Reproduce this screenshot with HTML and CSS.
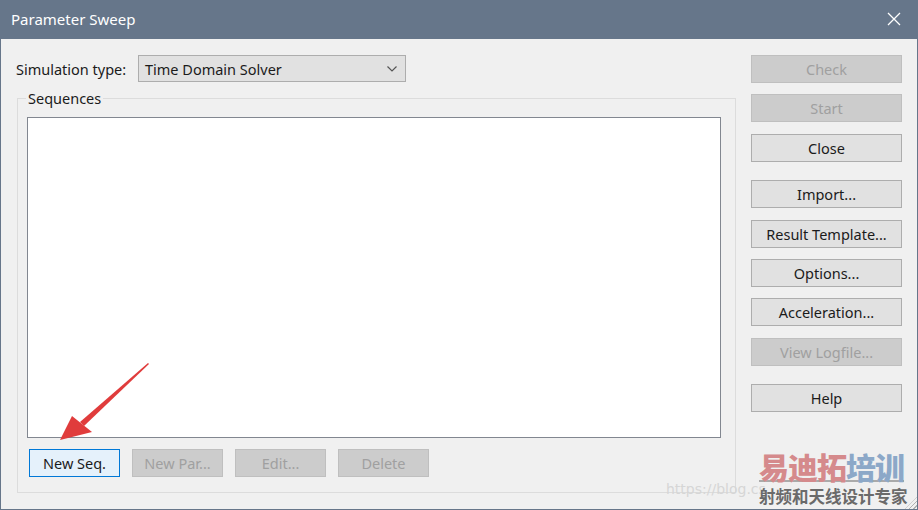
FILE: index.html
```html
<!DOCTYPE html>
<html>
<head>
<meta charset="utf-8">
<link rel="stylesheet" href="styles.css">
</head>
<body>
<div class="window">
  <div class="titlebar">
    <span class="title">Parameter Sweep</span>
    <svg class="close-x" width="14" height="14" viewBox="0 0 14 14"><path d="M1 1 L13 13 M13 1 L1 13" stroke="#fff" stroke-width="1.3" fill="none"/></svg>
  </div>
  <div class="body">
    <div class="left">
      <div class="simrow">
        <span class="label">Simulation type:</span>
        <div class="select">
          <span>Time Domain Solver</span>
          <svg width="12" height="8" viewBox="0 0 12 8"><path d="M1.5 1.5 L6 6 L10.5 1.5" stroke="#555" stroke-width="1.2" fill="none"/></svg>
        </div>
      </div>
      <fieldset class="group">
        <legend>Sequences</legend>
        <div class="listbox"></div>
        <div class="btnrow">
          <button class="btn focus">New Seq.</button>
          <button class="btn disabled">New Par...</button>
          <button class="btn disabled">Edit...</button>
          <button class="btn disabled">Delete</button>
        </div>
      </fieldset>
    </div>
    <div class="right">
      <button class="btn side disabled">Check</button>
      <button class="btn side disabled">Start</button>
      <button class="btn side">Close</button>
      <button class="btn side sep">Import...</button>
      <button class="btn side">Result Template...</button>
      <button class="btn side">Options...</button>
      <button class="btn side">Acceleration...</button>
      <button class="btn side disabled">View Logfile...</button>
      <button class="btn side sep">Help</button>
    </div>
  </div>
  <svg class="arrow" width="100" height="90" viewBox="0 0 100 90">
    <path d="M90 1 L22 60 L26 64 L91 2 Z" fill="#e03c3c"/>
    <path d="M2 78 L14 54 L34 70 Z" fill="#e03c3c"/>
  </svg>
  <div class="watermark">
    <div class="wm-url">https://blog.cs</div>
    <div class="wm-big"><span class="red">易迪拓</span><span class="blue">培训</span></div>
    <div class="wm-small">射频和天线设计专家</div>
  </div>
  <div class="grip"></div>
</div>
</body>
</html>
```
FILE: styles.css
```css
html, body {
  margin: 0;
  padding: 0;
}
body {
  width: 918px;
  height: 510px;
  overflow: hidden;
  font-family: "Noto Sans", "Open Sans", sans-serif;
  font-size: 14.5px;
  color: #1b1b1b;
}
.window {
  position: relative;
  width: 918px;
  height: 510px;
  display: flex;
  flex-direction: column;
  background: #f0f0f0;
}
.titlebar {
  height: 39px;
  flex: none;
  background: #66768a;
  display: flex;
  align-items: center;
  justify-content: space-between;
  padding: 0 17px 0 11px;
  box-sizing: border-box;
}
.title {
  color: #fff;
  font-size: 15px;
  margin-top: -1px;
}
.close-x {
  margin-top: -1px;
}
.body {
  flex: 1;
  display: flex;
  border: 1px solid #66768a;
  border-top: none;
  padding: 16px 16px 0 15px;
  box-sizing: border-box;
}
.left {
  width: 720px;
  display: flex;
  flex-direction: column;
}
.simrow {
  display: flex;
  align-items: center;
  height: 27px;
}
.label {
  width: 122px;
}
.select {
  width: 268px;
  height: 27px;
  box-sizing: border-box;
  background: #e1e1e1;
  border: 1px solid #adadad;
  display: flex;
  align-items: center;
  justify-content: space-between;
  padding: 0 7px 0 6px;
}
.group {
  margin: 7px 0 0 1px;
  padding: 10px 14px 14px 9px;
  border: 1px solid #dcdcdc;
  width: 719px;
  height: 404px;
  box-sizing: border-box;
}
.group legend {
  padding: 0 2px;
  margin-left: -1px;
  line-height: 18px;
}
.listbox {
  height: 321px;
  background: #fff;
  border: 1px solid #828790;
  box-sizing: border-box;
}
.btnrow {
  display: flex;
  gap: 12px;
  margin: 11px 0 0 2px;
}
.btn {
  font-family: inherit;
  font-size: 14.5px;
  color: #1b1b1b;
  width: 91px;
  height: 28px;
  box-sizing: border-box;
  background: #e1e1e1;
  border: 1px solid #adadad;
  padding: 0;
  margin: 0;
}
.btn.focus {
  background: #e5f1fb;
  border-color: #0078d7;
}
.btn.disabled {
  background: #cccccc;
  border-color: #bfbfbf;
  color: #a0a0a0;
}
.right {
  margin-left: 15px;
  display: flex;
  flex-direction: column;
  gap: 11.4px;
}
.btn.side {
  width: 151px;
  height: 28px;
}
.btn.sep {
  margin-top: 7px;
}
.arrow {
  position: absolute;
  left: 58px;
  top: 362px;
}
.watermark {
  position: absolute;
  left: 660px;
  top: 450px;
  width: 250px;
  height: 58px;
}
.wm-url {
  position: absolute;
  left: 6px;
  top: 31px;
  font-family: "DejaVu Sans", sans-serif;
  font-size: 14px;
  color: #d6d6d6;
}
.wm-big {
  position: absolute;
  left: 99px;
  top: 2px;
  font-family: "Noto Sans CJK SC", sans-serif;
  font-weight: 900;
  font-size: 30px;
  line-height: 28px;
  letter-spacing: -1px;
  border-bottom: 2px solid #aaa;
}
.wm-big .red {
  color: #d58a8c;
}
.wm-big .blue {
  color: #8ca8c8;
}
.wm-small {
  position: absolute;
  left: 99px;
  top: 36px;
  font-family: "Noto Sans CJK SC", sans-serif;
  font-weight: 700;
  font-size: 16.5px;
  line-height: 20px;
  color: #6a6a6a;
}
.grip {
  position: absolute;
  right: 1px;
  bottom: 1px;
  width: 12px;
  height: 12px;
  background: repeating-linear-gradient(135deg, transparent 0 2px, #b0b0b0 2px 3px);
  clip-path: polygon(100% 0, 100% 100%, 0 100%);
}
```
